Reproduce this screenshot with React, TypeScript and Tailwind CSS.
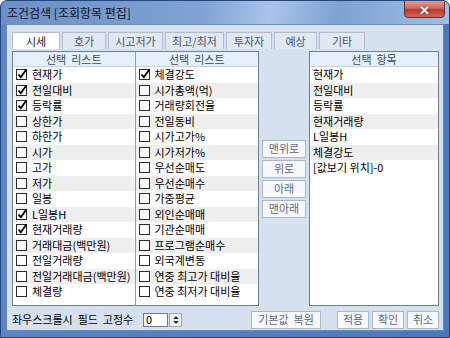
import React from "react";

const col1: [string, boolean][] = [
  ["현재가", true],
  ["전일대비", true],
  ["등락률", true],
  ["상한가", false],
  ["하한가", false],
  ["시가", false],
  ["고가", false],
  ["저가", false],
  ["일봉", false],
  ["L일봉H", true],
  ["현재거래량", true],
  ["거래대금(백만원)", false],
  ["전일거래량", false],
  ["전일거래대금(백만원)", false],
  ["체결량", false],
];

const col2: [string, boolean][] = [
  ["체결강도", true],
  ["시가총액(억)", false],
  ["거래량회전율", false],
  ["전일동비", false],
  ["시가고가%", false],
  ["시가저가%", false],
  ["우선순매도", false],
  ["우선순매수", false],
  ["가중평균", false],
  ["외인순매매", false],
  ["기관순매매", false],
  ["프로그램순매수", false],
  ["외국계변동", false],
  ["연중 최고가 대비율", false],
  ["연중 최저가 대비율", false],
];

const picked = ["현재가", "전일대비", "등락률", "현재거래량", "L일봉H", "체결강도", "[값보기 위치]-0"];

const tabs = [
  { label: "시세", w: "w-[48px]" },
  { label: "호가", w: "w-[44px]" },
  { label: "시고저가", w: "w-[55px]" },
  { label: "최고/최저", w: "w-[59px]" },
  { label: "투자자", w: "w-[46px]" },
  { label: "예상", w: "w-[43px]" },
  { label: "기타", w: "w-[46px]" },
];

function Check({ on }: { on: boolean }) {
  return (
    <svg width="13" height="13" viewBox="0 0 13 13" className="shrink-0">
      <rect x="1.5" y="1.5" width="10" height="10" fill="#fff" stroke="#2b2b2b" strokeWidth="1" />
      {on && <path d="M3.5 6.5 L5.8 9.2 L11.5 1.2" fill="none" stroke="#000" strokeWidth="1.9" />}
    </svg>
  );
}

function CheckList({ title, items, border }: { title: string; items: [string, boolean][]; border?: boolean }) {
  return (
    <div className={`w-[123px] flex flex-col overflow-hidden ${border ? "border-r border-[#8f9fb3]" : ""}`}>
      <div className="h-[15px] shrink-0 bg-[#e6f0fb] border-b border-[#c5d3e3] flex items-center justify-center text-[#3d4b5e] whitespace-pre leading-none">
        {title}
      </div>
      {items.map(([label, on], i) => (
        <div
          key={label}
          className={`h-[15.5px] shrink-0 flex items-center gap-[4px] pl-[2px] whitespace-pre ${i % 2 ? "bg-[#efefef]" : "bg-white"}`}
        >
          <Check on={on} />
          <span className="leading-none">{label}</span>
        </div>
      ))}
    </div>
  );
}

function Btn({ label, w }: { label: string; w: string }) {
  return (
    <div className={`${w} h-[18px] bg-[#f7f9fc] border border-[#a9b9cd] flex items-center justify-center text-[#5b6a7e] whitespace-pre leading-none`}>
      {label}
    </div>
  );
}

export default function App() {
  return (
    <div className="w-[450px] h-[338px] bg-[#3f6fb8] rounded-t-[7px] flex flex-col font-['Noto_Sans_CJK_KR',sans-serif] text-[11px] text-black overflow-hidden border border-[#27477a]">
      {/* Title bar */}
      <div className="h-[23px] shrink-0 relative bg-[linear-gradient(100deg,#6b90c6_0%,#7fa3d4_45%,#a9c5e8_60%,#7ea3d3_75%,#9dbde4_100%)] flex items-center pl-[6px]">
        <span className="text-[#111] text-[12px] leading-none">조건검색 [조회항목 편집]</span>
        <div className="absolute right-[4px] top-[-1px] w-[41px] h-[18px] rounded-b-[4px] border border-[#6a2a25] bg-[linear-gradient(180deg,#e49a8c_0%,#d06a5c_45%,#b8362b_55%,#d2685a_100%)] flex items-center justify-center">
          <span className="text-white font-bold text-[13px] leading-none [text-shadow:0_0_2px_#5a1a14]">✕</span>
        </div>
      </div>

      {/* Client area */}
      <div className="flex-1 px-[5px] pb-[6px] bg-[linear-gradient(90deg,#5a86c8,#4a78c0)]">
        <div className="h-full bg-[#d5e1ef] border border-[#7189ab] pl-[5px] pt-[7px] flex flex-col">
          {/* Tabs */}
          <div className="h-[17px] flex gap-[2px] shrink-0">
            {tabs.map((t, i) => (
              <div
                key={t.label}
                className={`${t.w} flex items-center justify-center border border-[#aebdd0] border-b-0 leading-none ${
                  i === 0 ? "bg-white text-[#222]" : "bg-[#e0e8f2] text-[#4a5568]"
                }`}
              >
                {t.label}
              </div>
            ))}
          </div>

          {/* Lists */}
          <div className="mt-[2px] h-[255px] flex shrink-0">
            <div className="w-[247px] flex border border-[#6f7f93] bg-white">
              <CheckList title="선택  리스트" items={col1} border />
              <CheckList title="선택  리스트" items={col2} />
            </div>

            <div className="ml-[3px] w-[44px] flex flex-col justify-center gap-[2px]">
              <Btn label="맨위로" w="w-[44px]" />
              <Btn label="위로" w="w-[44px]" />
              <Btn label="아래" w="w-[44px]" />
              <Btn label="맨아래" w="w-[44px]" />
            </div>

            <div className="ml-[3px] w-[130px] border border-[#6f7f93] bg-white flex flex-col">
              <div className="h-[15px] shrink-0 bg-[#e6f0fb] border-b border-[#c5d3e3] flex items-center justify-center text-[#3d4b5e] whitespace-pre leading-none">
                선택  항목
              </div>
              {picked.map((p, i) => (
                <div
                  key={p}
                  className={`h-[15.5px] shrink-0 flex items-center pl-[3px] whitespace-pre ${i % 2 ? "bg-[#efefef]" : "bg-white"}`}
                >
                  <span className="leading-none">{p}</span>
                </div>
              ))}
            </div>
          </div>

          {/* Bottom row */}
          <div className="mt-[4px] h-[19px] flex items-center shrink-0">
            <span className="w-[131px] whitespace-pre leading-none">좌우스크롤시  필드  고정수</span>
            <div className="w-[25px] h-[14px] bg-white border border-[#6f7f93] flex items-center pl-[2px] leading-none">0</div>
            <div className="ml-[1px] w-[13px] h-[14px] bg-[#eef2f7] border border-[#9aa8ba] flex flex-col items-center justify-center gap-[2px]">
              <span className="block w-0 h-0 border-x-[3px] border-x-transparent border-b-[3px] border-b-[#333]" />
              <span className="block w-0 h-0 border-x-[3px] border-x-transparent border-t-[3px] border-t-[#333]" />
            </div>
            <div className="ml-[69px]">
              <Btn label="기본값  복원" w="w-[70px]" />
            </div>
            <div className="ml-[16px] flex gap-[3px]">
              <Btn label="적용" w="w-[32px]" />
              <Btn label="확인" w="w-[32px]" />
              <Btn label="취소" w="w-[32px]" />
            </div>
          </div>
        </div>
      </div>
    </div>
  );
}
